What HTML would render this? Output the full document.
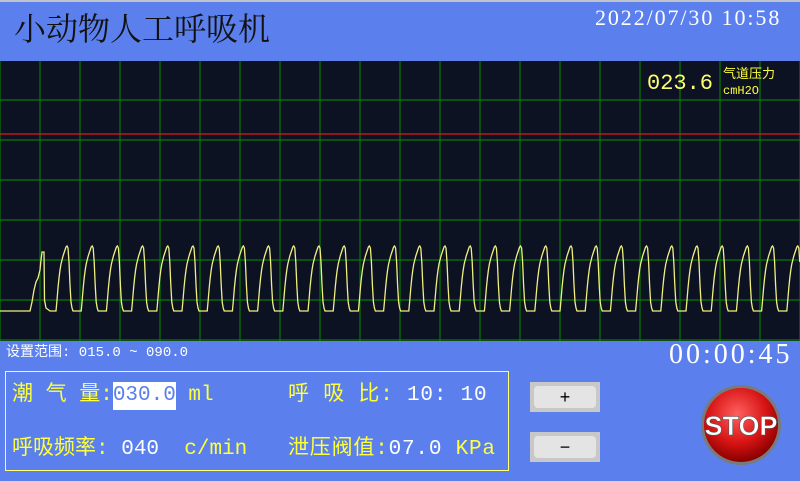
<!DOCTYPE html>
<html><head><meta charset="utf-8"><style>
body{margin:0;width:800px;height:481px;overflow:hidden;background:#5b80ed;position:relative;font-family:"Liberation Mono","Noto Sans CJK SC",monospace}
.a{position:absolute;white-space:pre}
.y{color:#ffff3a}.w{color:#fff}
.t{font:21px/28px 'Liberation Mono','Noto Sans CJK SC',monospace}
.btn{position:absolute;left:530px;width:70px;height:30px;background:#c8c8c8;box-sizing:border-box;padding:4px}
.btn div{background:#e4e4e4;border-radius:4px;height:22px;text-align:center;font:18px/22px "Liberation Sans",sans-serif;color:#000}
</style></head><body>
<div class="a" style="left:0;top:0;width:800px;height:2px;background:#bfc4cc"></div>
<div class="a" style="left:14px;top:8px;font:32px/38px 'Noto Serif CJK SC','Noto Sans CJK SC',serif;color:#111">小动物人工呼吸机</div>
<div class="a w" style="left:595px;top:4px;font:22px/28px 'Liberation Serif',serif;letter-spacing:1.9px">2022/07/30 10:58</div>
<svg class="a" style="left:0;top:61px" width="800" height="281" viewBox="0 61 800 281">
<rect x="0" y="61" width="800" height="280" fill="#0d1222"/>
<g id="grid" stroke="#087808" stroke-width="1.2"></g>
<line x1="0" y1="134" x2="800" y2="134" stroke="#e01818" stroke-width="1.3"/>
<path id="wave" fill="none" stroke="#f0f080" stroke-width="1.3"/>
<text x="647" y="89" font-family="Liberation Mono,monospace" font-size="22" fill="#ffff70">023.6</text>
<text x="723" y="78" font-family="Noto Sans CJK SC,sans-serif" font-size="13" fill="#ffff3a">气道压力</text>
<text x="723" y="94" font-family="Liberation Mono,monospace" font-size="12" fill="#ffff3a">cmH2O</text>
</svg>
<div class="a w" style="left:6px;top:345px;font:14px/16px 'Liberation Mono','Noto Sans CJK SC',monospace">设置范围: 015.0 ~ 090.0</div>
<div class="a w" style="left:669px;top:340px;font:28px/30px 'Liberation Serif',serif;letter-spacing:3px">00:00:45</div>
<div class="a" style="left:5px;top:371px;width:504px;height:100px;border:1px solid #ffff70;box-sizing:border-box"></div>
<div class="a y t" style="left:12px;top:382px">潮 气 量:<span style="background:#fff;color:#5b80ed;padding:2px 0 3px">030.0</span> ml</div>
<div class="a y t" style="left:288px;top:382px;letter-spacing:0.8px">呼 吸 比: <span class="w">10: 10</span></div>
<div class="a y t" style="left:12px;top:436px">呼吸频率: <span class="w">040</span>  c/min</div>
<div class="a y t" style="left:288px;top:436px;letter-spacing:0.8px">泄压阀值:<span class="w">07.0</span> KPa</div>
<div class="btn" style="top:382px"><div>+</div></div>
<div class="btn" style="top:432px"><div>−</div></div>
<svg class="a" style="left:700px;top:384px" width="84" height="84">
<defs><radialGradient id="g" cx="45%" cy="35%" r="65%"><stop offset="0" stop-color="#ff6060"/><stop offset="0.6" stop-color="#d81414"/><stop offset="1" stop-color="#880000"/></radialGradient></defs>
<circle cx="41" cy="41" r="40" fill="#7a7a7a"/>
<circle cx="41" cy="41" r="37" fill="url(#g)"/>
<text x="41" y="51" text-anchor="middle" font-family="Liberation Sans,sans-serif" font-weight="bold" font-size="27" fill="#fff" stroke="#555" stroke-width="0.6">STOP</text>
</svg>
<script>
var g=document.getElementById('grid'),s='';
for(var x=0;x<=800;x+=40)s+='<line x1="'+x+'" y1="61" x2="'+x+'" y2="341"/>';
for(var y=100;y<=340;y+=40)s+='<line x1="0" y1="'+y+'" x2="800" y2="'+y+'"/>';
g.innerHTML=s;
var d='M0 311 L30 311 L32 302 L34 290 L36 282 L38 278 L40 270 L41 260 L42 252 L44 252 L44.5 300 L46 308 L50 311';
var P=25.2;
var shape=[[0,311],[6,311],[7,300],[8,288],[9,278],[10,270],[11,264],[12,260],[13,256],[14,253],[15,250],[16,247],[17,246],[18,248],[19,262],[20,285],[21,302],[22,308],[23,311]];
for(var k=0;k<31;k++){var x0=50+k*P;shape.forEach(function(p){var xx=x0+p[0];if(xx<=800)d+=' L'+xx.toFixed(1)+' '+p[1];});}
document.getElementById('wave').setAttribute('d',d);
</script>
</body></html>
